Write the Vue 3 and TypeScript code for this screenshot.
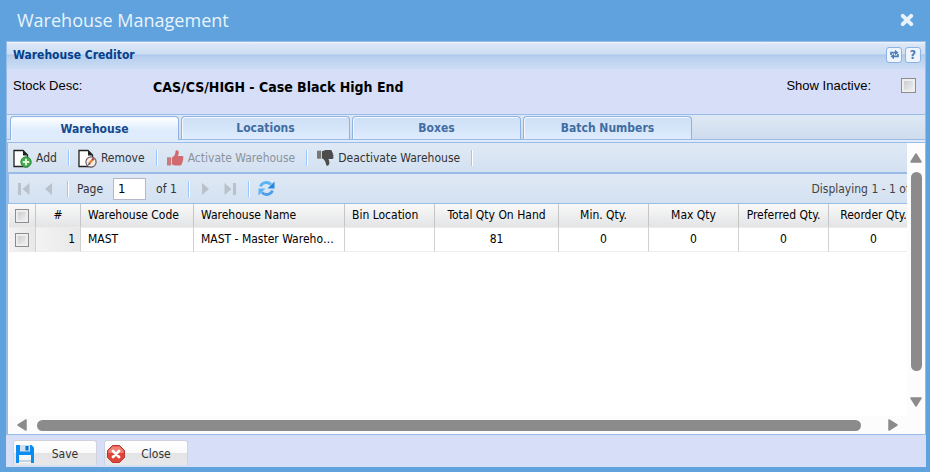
<script setup lang="ts">
import { ref } from 'vue'

interface Column {
  key: string
  title: string
  width: number
  align: 'left' | 'center'
}

const tabs = ['Warehouse', 'Locations', 'Boxes', 'Batch Numbers']
const activeTab = ref('Warehouse')
const showInactive = ref(false)
const page = ref('1')

const columns: Column[] = [
  { key: 'code', title: 'Warehouse Code', width: 113, align: 'left' },
  { key: 'name', title: 'Warehouse Name', width: 151, align: 'left' },
  { key: 'bin', title: 'Bin Location', width: 90, align: 'left' },
  { key: 'total', title: 'Total Qty On Hand', width: 124, align: 'center' },
  { key: 'min', title: 'Min. Qty.', width: 90, align: 'center' },
  { key: 'max', title: 'Max Qty', width: 90, align: 'center' },
  { key: 'preferred', title: 'Preferred Qty.', width: 90, align: 'center' },
  { key: 'reorder', title: 'Reorder Qty.', width: 90, align: 'center' },
]

const rows: Record<string, string>[] = [
  {
    code: 'MAST',
    name: 'MAST - Master Warehouse',
    bin: '',
    total: '81',
    min: '0',
    max: '0',
    preferred: '0',
    reorder: '0',
  },
]
</script>

<template>
  <div class="window">
    <header class="titlebar">
      <h1>Warehouse Management</h1>
      <button class="plain close" aria-label="Close window">
        <svg width="14" height="14" viewBox="0 0 14 14">
          <path d="M2.8 2.8 11.2 11.2M11.2 2.8 2.8 11.2" stroke="#e9f2fb" stroke-width="4" stroke-linecap="round" />
        </svg>
      </button>
    </header>

    <main class="panel">
      <div class="panel-head">
        <h2>Warehouse Creditor</h2>
        <button class="tool" aria-label="Refresh">
          <svg width="11" height="11" viewBox="0 0 11 11">
            <path d="M2 6V3.700H6.500M9 5V7.300H4.500" fill="none" stroke="#4a7fb8" stroke-width="1.700" />
            <path d="M6 .8 9.500 3.700 6 6.200zM5 4.800 1.500 7.300 5 10.200z" fill="#4a7fb8" />
          </svg>
        </button>
        <button class="tool" aria-label="Help">?</button>
      </div>

      <div class="form">
        <span>Stock Desc:</span>
        <strong>CAS/CS/HIGH - Case Black High End</strong>
        <label for="inactive">Show Inactive:</label>
        <input id="inactive" v-model="showInactive" class="box big" type="checkbox" />
      </div>

      <nav class="tabs">
        <button
          v-for="tab in tabs"
          :key="tab"
          class="tab"
          :class="{ active: tab === activeTab }"
          @click="activeTab = tab"
        >
          {{ tab }}
        </button>
      </nav>

      <section class="scroller">
        <div class="viewport">
          <div class="content">
            <div class="toolbar">
              <button class="plain action">
                <svg width="19" height="19" viewBox="0 0 19 19">
                  <path d="M1 1.500H10L14.500 6V17.500H1z" fill="#fff" stroke="#222" stroke-width="1.300" />
                  <path d="M10 1v5.400h5z" fill="#222" />
                  <circle cx="13" cy="13" r="5.200" fill="#46a94e" stroke="#2f8c3a" />
                  <path d="M13 9.800v6.400M9.800 13h6.400" stroke="#e2f6e2" stroke-width="1.900" />
                </svg>
                <span>Add</span>
              </button>
              <i class="sep"></i>
              <button class="plain action">
                <svg width="19" height="19" viewBox="0 0 19 19">
                  <path d="M1 1.500H10L14.500 6V17.500H1z" fill="#fff" stroke="#222" stroke-width="1.300" />
                  <path d="M10 1v5.400h5z" fill="#222" />
                  <circle cx="13" cy="13" r="5.100" fill="#f3eeee" stroke="#765c5c" stroke-width="1.200" />
                  <path d="m10 16 1-2.600 1.800 1.600z" fill="#222" />
                  <path d="m11.300 14.200 3.500-3.800" stroke="#e0852e" stroke-width="2.200" />
                  <path d="m14.500 10.800 1.100-1.200" stroke="#b93030" stroke-width="2.200" />
                </svg>
                <span>Remove</span>
              </button>
              <i class="sep"></i>
              <button class="plain action" disabled>
                <svg width="18" height="18" viewBox="0 0 18 18">
                  <path d="M1 8.300h4.200v8.200H1z" fill="#c77c82" />
                  <path d="M6 8.600C8.200 7.800 9.500 5.200 9.500 2.600 9.500.6 12.800.7 12.800 3.600c0 1.400-.5 2.300-.8 3.300H16c1.700 0 1.900 2 .8 2.600.8.8.6 2-.3 2.400.5.8.2 1.900-.7 2.200.3.9-.2 2.300-1.500 2.300H9c-1.200 0-1.900-.7-3-.8z" fill="#d3696f" />
                </svg>
                <span>Activate Warehouse</span>
              </button>
              <i class="sep"></i>
              <button class="plain action">
                <svg width="18" height="18" viewBox="0 0 18 18">
                  <path d="M1 1.700h4.200v8H1z" fill="#777" />
                  <path d="M6 2.300C7.500 2 8.500 1 10 1h4.300c1.400 0 2 .9 1.700 2 .9.500 1.200 1.400.8 2.200.9.600 1 1.700.3 2.400.9 1.200.2 2.500-1.100 2.500h-3.500c.3 1.100.9 2.200.9 3.700 0 3.100-2.900 4-3.300 1.800C9.600 12.500 8.500 10.200 6 9.400z" fill="#4c4c4c" />
                </svg>
                <span>Deactivate Warehouse</span>
              </button>
              <i class="sep"></i>
            </div>

            <div class="toolbar paging">
              <button class="plain nav" aria-label="First page" disabled>
                <svg width="14" height="14" viewBox="0 0 14 14">
                  <path d="M1 1h3v12H1zM12.500 1v12L5.500 7z" fill="#b9c1cb" />
                </svg>
              </button>
              <button class="plain nav" aria-label="Previous page" disabled>
                <svg width="14" height="14" viewBox="0 0 14 14"><path d="M10 1v12L3 7z" fill="#b9c1cb" /></svg>
              </button>
              <i class="sep"></i>
              <label for="page">Page</label>
              <input id="page" v-model="page" class="page" type="text" />
              <span>of 1</span>
              <i class="sep"></i>
              <button class="plain nav" aria-label="Next page" disabled>
                <svg width="14" height="14" viewBox="0 0 14 14"><path d="M4 1v12l7-6z" fill="#b9c1cb" /></svg>
              </button>
              <button class="plain nav" aria-label="Last page" disabled>
                <svg width="14" height="14" viewBox="0 0 14 14">
                  <path d="M10 1h3v12h-3zM1.500 1v12l7-6z" fill="#b9c1cb" />
                </svg>
              </button>
              <i class="sep"></i>
              <button class="plain reload" aria-label="Reload">
                <svg width="17" height="17" viewBox="0 0 17 17">
                  <path d="M2.500 6.500C4 2.500 9.500 1 13 4.500" fill="none" stroke="#5db4f5" stroke-width="2.800" />
                  <path d="M16.500 1.500v7h-7z" fill="#2b86e0" />
                  <path d="M14.500 10.500C13 14.500 7.500 16 4 12.500" fill="none" stroke="#4f9fe8" stroke-width="2.800" />
                  <path d="M.5 15.500v-7h7z" fill="#5db4f5" />
                </svg>
              </button>
              <span class="status">Displaying 1 - 1 of 1</span>
            </div>

            <table>
              <colgroup>
                <col class="c-check" />
                <col class="c-num" />
                <col v-for="c in columns" :key="c.key" :style="{ width: c.width + 'px' }" />
              </colgroup>
              <thead>
                <tr>
                  <th class="check"><input class="box" type="checkbox" aria-label="Select all" /></th>
                  <th class="center">#</th>
                  <th v-for="c in columns" :key="c.key" :class="c.align">{{ c.title }}</th>
                </tr>
              </thead>
              <tbody>
                <tr v-for="(row, i) in rows" :key="i">
                  <td class="check grey"><input class="box" type="checkbox" :aria-label="'Select row ' + (i + 1)" /></td>
                  <td class="num grey">{{ i + 1 }}</td>
                  <td v-for="c in columns" :key="c.key" :class="c.align">{{ row[c.key] }}</td>
                </tr>
              </tbody>
            </table>
          </div>
        </div>

        <div class="vbar">
          <svg width="12" height="10" viewBox="0 0 12 10"><path d="M6 1 11 9H1z" fill="#8b8b8b" stroke="#8b8b8b" stroke-width="1.500" stroke-linejoin="round" /></svg>
          <div class="vtrack"><div class="vthumb"></div></div>
          <svg width="12" height="10" viewBox="0 0 12 10"><path d="M6 9 11 1H1z" fill="#8b8b8b" stroke="#8b8b8b" stroke-width="1.500" stroke-linejoin="round" /></svg>
        </div>
        <div class="hbar">
          <svg width="10" height="12" viewBox="0 0 10 12"><path d="M1 6 9 1v10z" fill="#8b8b8b" stroke="#8b8b8b" stroke-width="1.500" stroke-linejoin="round" /></svg>
          <div class="htrack"><div class="hthumb"></div></div>
          <svg width="10" height="12" viewBox="0 0 10 12"><path d="M9 6 1 1v10z" fill="#8b8b8b" stroke="#8b8b8b" stroke-width="1.500" stroke-linejoin="round" /></svg>
        </div>
      </section>

      <footer class="footer">
        <button class="foot">
          <svg width="18" height="18" viewBox="0 0 18 18">
            <path d="M0 0h15.500L18 2.500V18H0z" fill="#0a8cf0" />
            <path d="M4 0h10v6.500H4z" fill="#cfe0f0" />
            <path d="M9.500 1h3v4.500h-3z" fill="#0a6fd0" />
            <path d="M3 10h12v8H3z" fill="#f4f7fa" />
            <path d="M3 15h12v2H3z" fill="#c3d3e2" />
          </svg>
          <span>Save</span>
        </button>
        <button class="foot">
          <svg width="18" height="18" viewBox="0 0 18 18">
            <path d="M5.500.5h7l5 5v7l-5 5h-7l-5-5v-7z" fill="#df4638" stroke="#b8372f" />
            <path d="M5.500 1.500h7l4 4V8h-15V5.500z" fill="#ee8175" />
            <path d="m6 6 6 6m0-6-6 6" stroke="#fff" stroke-width="2.800" stroke-linecap="round" />
          </svg>
          <span>Close</span>
        </button>
      </footer>
    </main>
  </div>
</template>

<style>
body {
  margin: 0;
}
</style>

<style scoped>
* {
  box-sizing: border-box;
}

.window {
  display: flex;
  flex-direction: column;
  min-height: 100vh;
  padding: 0 4px 5px 6px;
  background: #5fa2de;
  font-family: 'DejaVu Sans Condensed', 'DejaVu Sans', sans-serif;
  font-size: 12px;
  color: #000;
}

button,
input {
  margin: 0;
  font: inherit;
  color: inherit;
}

svg {
  display: block;
  flex: none;
}

.plain {
  padding: 0;
  border: 0;
  background: none;
}

.titlebar {
  display: flex;
  align-items: center;
  justify-content: space-between;
  height: 41px;
  padding: 0 12px 1px 11px;
}

h1 {
  margin: 0;
  font: 400 18px/24px 'Open Sans', sans-serif;
  color: #eaf3fb;
}

.panel {
  flex: 1;
  display: flex;
  flex-direction: column;
  min-width: 0;
  background: #d7def7;
}

.panel-head {
  display: flex;
  align-items: center;
  gap: 3px;
  height: 28px;
  padding: 0 4px 2px 6px;
  border: 1px solid #99bbe8;
  border-bottom: 0;
  background: linear-gradient(#f3f7fb 0, #dae7f6 2px, #cddef3 12px, #abc7ec 13px, #b8cfee 15px, #cbddf3 100%);
}

h2 {
  flex: 1;
  margin: 0;
  font-size: 12px;
  font-weight: 700;
  color: #04408c;
}

.tool {
  display: flex;
  align-items: center;
  justify-content: center;
  width: 16px;
  height: 16px;
  padding: 0;
  border: 1px solid #8db2e3;
  border-radius: 3px;
  background: #eef5fd;
  color: #4a7fb8;
  font-size: 12px;
  font-weight: 700;
  line-height: 14px;
}

.form {
  display: flex;
  align-items: flex-start;
  height: 45px;
  padding: 8px 9px 0 6px;
  border-left: 1px solid #99bbe8;
  border-right: 1px solid #99bbe8;
  font: 13px/17px 'Liberation Sans', sans-serif;
}

.form span {
  width: 140px;
}

.form strong {
  flex: 1;
  padding-top: 2px;
  font-family: 'DejaVu Sans Condensed', 'DejaVu Sans', sans-serif;
  font-size: 14px;
}

.form label {
  margin-right: 30px;
}

.box {
  appearance: none;
  display: block;
  width: 14px;
  height: 14px;
  border: 1px solid #8d8d8d;
  background: linear-gradient(135deg, #c4c6ca, #f5f5f5);
  box-shadow: inset 0 0 0 2px #eee;
}

.box.big {
  width: 15px;
  height: 15px;
  margin-top: 1px;
}

.box:checked {
  background: #4a7fb8;
}

.tabs {
  display: flex;
  gap: 2px;
  height: 29px;
  padding: 1px 2px 0 3px;
  border: 1px solid #99bbe8;
  background: linear-gradient(#dfe9f5 0, #cedcee 24px, #99bbe8 24px, #99bbe8 25px, #dfebfa 25px);
}

.tab {
  width: 169px;
  height: 23px;
  padding: 0;
  border: 1px solid #8db2e3;
  border-bottom: 0;
  border-radius: 4px 4px 0 0;
  background: linear-gradient(#cddff5, #deecfd);
  box-shadow: inset 1px 1px 0 #f3f8fe;
  color: #416da3;
  font-size: 12px;
  font-weight: 700;
}

.tab.active {
  height: 24px;
  background: linear-gradient(#fff, #deecfd 60%);
  color: #15498b;
}

.scroller {
  flex: 1;
  display: grid;
  grid-template: minmax(0, 1fr) 18px / minmax(0, 1fr) 18px;
  border: solid #99bbe8;
  border-width: 0 1px 1px 2px;
  background: #fcfcfc;
}

.viewport {
  overflow: hidden;
  background: #fff;
}

.content {
  min-width: 919px;
}

.toolbar {
  display: flex;
  align-items: center;
  height: 31px;
  padding: 1px 5px 0;
  border-bottom: 2px solid #99bbe8;
  background: linear-gradient(#dfe9f5, #d3e1f1);
  color: #333;
}

.toolbar.paging {
  height: 30px;
  padding: 0 7px 0 8px;
  border-bottom-width: 1px;
  border-left: 1px solid #99bbe8;
}

.action {
  display: flex;
  align-items: center;
  gap: 4px;
}

.action:disabled {
  color: #8c929c;
}

.sep {
  width: 2px;
  height: 16px;
  margin: 0 8px 0 11px;
  border-left: 1px solid #98c8ff;
  border-right: 1px solid #fff;
}

.nav {
  width: 14px;
  margin-right: 11px;
}

.nav + .sep {
  margin-left: 0;
}

.page {
  width: 33px;
  height: 22px;
  margin: 0 10px;
  padding: 0 4px;
  border: 1px solid #b5b8c8;
  background: #fff;
  font-size: 13px;
  color: #000;
}

.status {
  margin-left: auto;
  color: #444;
}

table {
  width: 910px;
  margin-left: 1px;
  table-layout: fixed;
  border-collapse: separate;
  border-spacing: 0;
}

.c-check {
  width: 27px;
}

.c-num {
  width: 45px;
}

th,
td {
  height: 24px;
  padding: 0 7px 2px;
  overflow: hidden;
  border-right: 1px solid #d0d0d0;
  border-bottom: 1px solid #ededed;
  font-weight: 400;
  line-height: 20px;
  text-align: left;
  text-overflow: ellipsis;
  white-space: nowrap;
}

th {
  background: linear-gradient(#f9f9f9, #e3e4e6);
  border-right-color: #c5c5c5;
}

.center {
  padding: 0 0 2px;
  text-align: center;
}

.num {
  padding-right: 5px;
  text-align: right;
}

.check {
  padding: 1px 6px 0;
}

.grey {
  background: linear-gradient(90deg, #f3f3f3, #e8e8e8);
}

.vbar {
  display: flex;
  flex-direction: column;
  align-items: center;
  gap: 9px;
  padding: 10px 0 9px;
}

.vtrack {
  flex: 1;
  width: 11px;
}

.vthumb {
  height: 92%;
  border-radius: 6px;
  background: #8b8b8b;
}

.hbar {
  display: flex;
  align-items: center;
  gap: 10px;
  padding: 0 9px;
}

.htrack {
  flex: 1;
  height: 11px;
}

.hthumb {
  width: 98%;
  height: 11px;
  border-radius: 6px;
  background: #8b8b8b;
}

.footer {
  display: flex;
  gap: 7px;
  height: 32px;
  padding: 5px 7px 2px;
}

.foot {
  display: flex;
  align-items: center;
  width: 84px;
  height: 25px;
  padding: 1px 0 0 2px;
  border: 1px solid #d0d3dc;
  border-bottom: 0;
  border-radius: 3px 3px 0 0;
  background: linear-gradient(#fff 0, #f9f9f9 50%, #e3e4e6 52%, #e8e8ea 100%);
  color: #333;
}

.foot span {
  flex: 1;
}
</style>
